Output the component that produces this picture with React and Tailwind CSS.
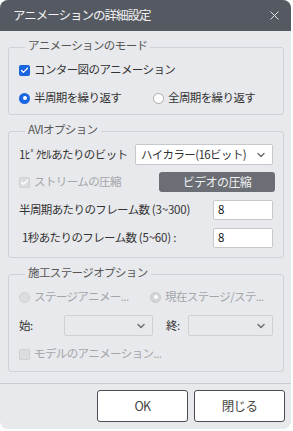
import { ChevronDown, X, Check } from "lucide-react";

const font = { fontFamily: '"Noto Sans CJK JP", "Noto Sans", sans-serif' };

function CheckBox({ checked, disabled, label }) {
  return (
    <label className={`flex items-center gap-[4px] h-[20px] ${disabled ? "text-[#a3a5a9]" : "text-[#333]"}`}>
      <span
        className={`w-[11px] h-[11px] shrink-0 rounded-[2px] flex items-center justify-center ${
          disabled
            ? "bg-[#dcdde0] border border-[#cfd0d3]"
            : checked
            ? "bg-[#1a66e0]"
            : "bg-white border border-[#999]"
        }`}
      >
        {checked && <Check size={9} strokeWidth={3.5} className="text-white" />}
      </span>
      <span className="whitespace-nowrap">{label}</span>
    </label>
  );
}

function Radio({ checked, disabled, label }) {
  return (
    <label className={`flex items-center gap-[4px] h-[20px] ${disabled ? "text-[#a3a5a9]" : "text-[#333]"}`}>
      <span
        className={`w-[11px] h-[11px] shrink-0 rounded-full flex items-center justify-center ${
          disabled
            ? checked
              ? "bg-[#d4d5d8] border border-[#c8c9cc]"
              : "bg-[#dcdde0] border border-[#cfd0d3]"
            : checked
            ? "bg-[#1a66e0]"
            : "bg-white border border-[#aaa]"
        }`}
      >
        {checked && <span className="w-[4px] h-[4px] rounded-full bg-white" />}
      </span>
      <span className="whitespace-nowrap">{label}</span>
    </label>
  );
}

function Select({ value, className }) {
  return (
    <div className={`h-[21px] border rounded-[2px] flex items-center justify-between pl-[5px] pr-[5px] ${className}`}>
      <span className="whitespace-nowrap">{value}</span>
      <ChevronDown size={12} strokeWidth={3} className="text-[#6f7175] shrink-0" />
    </div>
  );
}

function NumField({ value }) {
  return (
    <div className="h-[20px] bg-white border border-[#c7c8cc] rounded-[2px] flex items-center px-[4px] text-[#111] tracking-normal">
      {value}
    </div>
  );
}

function Group({ title, children, className = "" }) {
  return (
    <fieldset className={`min-w-0 ml-[8px] mr-[7px] border border-[#cfd1d6] rounded-[3px] pl-[10px] pr-[10px] ${className}`}>
      <legend className="ml-[6px] px-[3px] pb-[4px] text-[#555] leading-[16px]">{title}</legend>
      {children}
    </fieldset>
  );
}

export default function App() {
  return (
    <div className="w-[293px] h-[431px] bg-white" style={font}>
      <div className="w-[291px] h-[429px] bg-[#e8e9ec] rounded-[8px] overflow-hidden flex flex-col text-[11.5px] tracking-[-0.6px] text-[#333]">
        {/* title bar */}
        <div className="h-[31px] bg-[#555a62] flex items-center justify-between pl-[13px] pr-[9px] shrink-0">
          <span className="text-[#f2f2f2] text-[12.5px] tracking-[-1px]">アニメーションの詳細設定</span>
          <X size={15} strokeWidth={1.5} className="text-[#e8e8e8]" />
        </div>

        {/* animation mode */}
        <Group title="アニメーションのモード" className="mt-[6px] pb-[6px]">
          <div className="pt-[3px] flex flex-col gap-[8px]">
            <CheckBox checked label="コンター図のアニメーション" />
            <div className="grid grid-cols-[134px_1fr]">
              <Radio checked label="半周期を繰り返す" />
              <Radio label="全周期を繰り返す" />
            </div>
          </div>
        </Group>

        {/* AVI */}
        <Group title="AVIオプション" className="mt-[6px] pb-[9px]">
          <div className="pt-[3px] flex flex-col gap-[8px]">
            <div className="grid grid-cols-[1fr_138px] items-center h-[20px]">
              <span className="whitespace-nowrap">1ﾋﾟｸｾﾙあたりのビット</span>
              <Select value="ハイカラー(16ビット)" className="bg-white border-[#c7c8cc]" />
            </div>
            <div className="grid grid-cols-[1fr_116px] items-center h-[20px] -mr-[2px]">
              <CheckBox checked disabled label="ストリームの圧縮" />
              <button className="h-[20px] bg-[#6b6e74] text-[#f0f0f0] rounded-[3px] text-[12px]">
                ビデオの圧縮
              </button>
            </div>
            <div className="grid grid-cols-[1fr_60px] items-center h-[20px]">
              <span className="whitespace-nowrap">
                半周期あたりのフレーム数<span className="tracking-[-0.2px]"> (3~300)</span>
              </span>
              <NumField value="8" />
            </div>
            <div className="grid grid-cols-[1fr_60px] items-center h-[20px]">
              <span className="pl-[3px] whitespace-nowrap">
                1秒あたりのフレーム数<span className="tracking-[-0.2px]"> (5~60) :</span>
              </span>
              <NumField value="8" />
            </div>
          </div>
        </Group>

        {/* stage */}
        <Group title="施工ステージオプション" className="mt-[6px] pb-[7px]">
          <div className="pt-[3px] flex flex-col gap-[8px]">
            <div className="grid grid-cols-[131px_1fr]">
              <Radio disabled label="ステージアニメー..." />
              <Radio disabled checked label="現在ステージ/ステ..." />
            </div>
            <div className="grid grid-cols-[45px_89px_13px_22px_1fr] items-center h-[21px]">
              <span>始:</span>
              <Select value="" className="border-[#cfd0d3] bg-[#e8e9ec]" />
              <span />
              <span>終:</span>
              <Select value="" className="border-[#cfd0d3] bg-[#e8e9ec]" />
            </div>
            <CheckBox disabled label="モデルのアニメーション..." />
          </div>
        </Group>

        <div className="mt-[11px] border-t border-[#c9cbd0]" />

        {/* footer buttons */}
        <div className="flex justify-end gap-[6px] pr-[6px] pt-[6px]">
          <button className="w-[91px] h-[32px] bg-white border border-[#4a4d52] rounded-[3px] text-[#444] text-[12.5px]">
            OK
          </button>
          <button className="w-[91px] h-[32px] bg-white border border-[#4a4d52] rounded-[3px] text-[#444] text-[12.5px]">
            閉じる
          </button>
        </div>
      </div>
    </div>
  );
}
